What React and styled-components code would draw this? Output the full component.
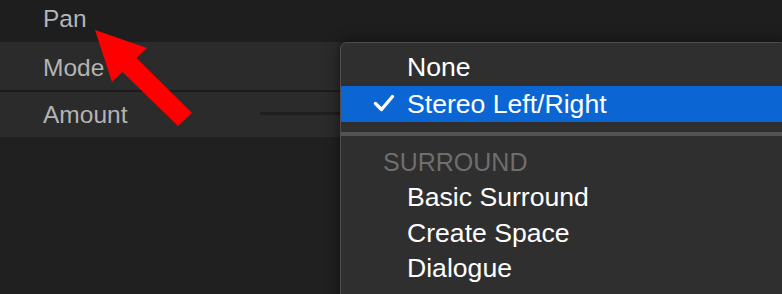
import styled, { createGlobalStyle } from "styled-components";

const GlobalStyle = createGlobalStyle`
  html, body {
    margin: 0;
    padding: 0;
    background: #202020;
    overflow: hidden;
  }
  body {
    font-family: "Liberation Sans", Arial, sans-serif;
  }
`;

const Screen = styled.div`
  position: relative;
  width: 782px;
  height: 294px;
  background: #202020;
  overflow: hidden;
`;

const Row = styled.div`
  display: flex;
  align-items: center;
  height: ${(p) => p.h}px;
  padding: ${(p) => p.pad || "0"};
  box-sizing: border-box;
  background: ${(p) => p.bg};
`;

const Label = styled.div`
  width: 260px;
  padding-left: 43px;
  box-sizing: border-box;
  flex-shrink: 0;
  font-size: 24.5px;
  color: #b4b4b4;
`;

const Divider = styled.div`
  height: 2px;
  background: #1c1c1c;
`;

const Track = styled.div`
  flex: 1;
  height: 3px;
  margin-top: -2px;
  background: #1f1f1f;
`;

const Menu = styled.div`
  position: absolute;
  left: 340px;
  top: 42px;
  width: 446px;
  padding-top: 7px;
  padding-bottom: 20px;
  box-sizing: border-box;
  background: #2f2f2f;
  border: 1px solid #4e4e4e;
  border-radius: 7px;
  box-shadow: 0 0 14px rgba(0, 0, 0, 0.55);
`;

const Item = styled.div`
  position: relative;
  height: ${(p) => (p.selected ? 36 : 35.5)}px;
  line-height: ${(p) => (p.selected ? 36 : 35.5)}px;
  padding-left: 66px;
  font-size: 26.6px;
  color: #ffffff;
  background: ${(p) => (p.selected ? "#0b66d4" : "transparent")};
  white-space: nowrap;
`;

const Check = styled.svg`
  position: absolute;
  left: 32px;
  top: 8px;
`;

const Separator = styled.div`
  height: 4px;
  margin: 10px 0 9px;
  background: #545454;
`;

const Header = styled.div`
  height: 35.5px;
  line-height: 35.5px;
  padding-left: 42px;
  font-size: 25px;
  color: #6e6e6e;
`;

const Arrow = styled.svg`
  position: absolute;
  left: 0;
  top: 0;
  pointer-events: none;
`;

const items = ["Basic Surround", "Create Space", "Dialogue"];

export default function App() {
  return (
    <>
      <GlobalStyle />
      <Screen>
        <Row h={42} bg="#1e1e1e" pad="0 0 4px 0">
          <Label>Pan</Label>
        </Row>
        <Row h={48} bg="#2b2b2b" pad="4px 0 0 0">
          <Label>Mode</Label>
        </Row>
        <Divider />
        <Row h={45} bg="#2b2b2b">
          <Label>Amount</Label>
          <Track />
        </Row>

        <Menu>
          <Item>None</Item>
          <Item selected>
            <Check width="22" height="18" viewBox="0 0 22 18">
              <path
                d="M2.5 9.5 L8.5 15.5 L19.5 2.5"
                fill="none"
                stroke="#fff"
                strokeWidth="3.4"
                strokeLinecap="round"
                strokeLinejoin="round"
              />
            </Check>
            Stereo Left/Right
          </Item>
          <Separator />
          <Header>SURROUND</Header>
          {items.map((t) => (
            <Item key={t}>{t}</Item>
          ))}
        </Menu>

        <Arrow width="782" height="294" viewBox="0 0 782 294">
          <polygon
            points="95,30 147,48 136.5,58 192,113 178,126 122.5,72 112,82"
            fill="#ff0000"
          />
        </Arrow>
      </Screen>
    </>
  );
}
